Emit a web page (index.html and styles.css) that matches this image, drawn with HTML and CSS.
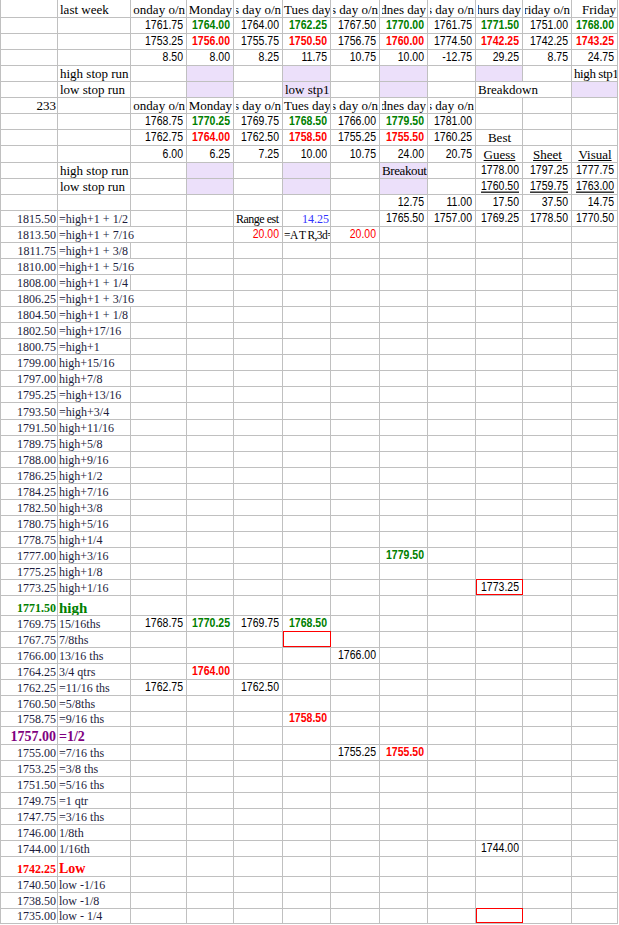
FILE: index.html
```html
<!DOCTYPE html>
<html>
<head>
<meta charset="utf-8">
<link rel="stylesheet" href="styles.css">
</head>
<body>
<table class="sheet">
<colgroup>
<col class="cA"><col class="cB"><col class="cC"><col class="cD"><col class="cE"><col class="cF"><col class="cG"><col class="cH"><col class="cI"><col class="cJ"><col class="cK"><col class="cL">
</colgroup>
<tbody>
<tr class="h17"><td></td><td>last week</td><td class="hd"><div><span>Monday o/n</span></div></td><td class="hd"><div><span>Monday</span></div></td><td class="hd"><div><span>Tues day o/n</span></div></td><td class="hl">Tues day</td><td class="hd"><div><span>Wednes day o/n</span></div></td><td class="hd"><div><span>Wednes day</span></div></td><td class="hd"><div><span>Thurs day o/n</span></div></td><td class="hd"><div><span>Thurs day</span></div></td><td class="hd"><div><span>Friday o/n</span></div></td><td class="hd"><div><span>Friday</span></div></td></tr>
<tr><td></td><td></td><td class="n"><span>1761.75</span></td><td class="n b g"><span>1764.00</span></td><td class="n"><span>1764.00</span></td><td class="n b g"><span>1762.25</span></td><td class="n"><span>1767.50</span></td><td class="n b g"><span>1770.00</span></td><td class="n"><span>1761.75</span></td><td class="n b g"><span>1771.50</span></td><td class="n"><span>1751.00</span></td><td class="n b g"><span>1768.00</span></td></tr>
<tr><td></td><td></td><td class="n"><span>1753.25</span></td><td class="n b red"><span>1756.00</span></td><td class="n"><span>1755.75</span></td><td class="n b red"><span>1750.50</span></td><td class="n"><span>1756.75</span></td><td class="n b red"><span>1760.00</span></td><td class="n"><span>1774.50</span></td><td class="n b red"><span>1742.25</span></td><td class="n"><span>1742.25</span></td><td class="n b red"><span>1743.25</span></td></tr>
<tr><td></td><td></td><td class="n"><span>8.50</span></td><td class="n"><span>8.00</span></td><td class="n"><span>8.25</span></td><td class="n"><span>11.75</span></td><td class="n"><span>10.75</span></td><td class="n"><span>10.00</span></td><td class="n"><span>-12.75</span></td><td class="n"><span>29.25</span></td><td class="n"><span>8.75</span></td><td class="n"><span>24.75</span></td></tr>
<tr><td></td><td>high stop run</td><td></td><td class="lv"></td><td></td><td class="lv"></td><td></td><td class="lv"></td><td></td><td class="lv"></td><td></td><td class="tight">high stp1</td></tr>
<tr><td></td><td>low stop run</td><td></td><td class="lv"></td><td></td><td class="lv">low stp1</td><td></td><td class="lv"></td><td></td><td class="ov">Breakdown</td><td></td><td class="lv"></td></tr>
<tr><td class="r">233</td><td></td><td class="hd"><div><span>Monday o/n</span></div></td><td class="hd"><div><span>Monday</span></div></td><td class="hd"><div><span>Tues day o/n</span></div></td><td class="hl">Tues day</td><td class="hd"><div><span>Wednes day o/n</span></div></td><td class="hd"><div><span>Wednes day</span></div></td><td class="hd"><div><span>Thurs day o/n</span></div></td><td></td><td></td><td></td></tr>
<tr><td></td><td></td><td class="n"><span>1768.75</span></td><td class="n b g"><span>1770.25</span></td><td class="n"><span>1769.75</span></td><td class="n b g"><span>1768.50</span></td><td class="n"><span>1766.00</span></td><td class="n b g"><span>1779.50</span></td><td class="n"><span>1781.00</span></td><td></td><td></td><td></td></tr>
<tr><td></td><td></td><td class="n"><span>1762.75</span></td><td class="n b red"><span>1764.00</span></td><td class="n"><span>1762.50</span></td><td class="n b red"><span>1758.50</span></td><td class="n"><span>1755.25</span></td><td class="n b red"><span>1755.50</span></td><td class="n"><span>1760.25</span></td><td class="c">Best</td><td></td><td></td></tr>
<tr class="h17"><td></td><td></td><td class="n"><span>6.00</span></td><td class="n"><span>6.25</span></td><td class="n"><span>7.25</span></td><td class="n"><span>10.00</span></td><td class="n"><span>10.75</span></td><td class="n"><span>24.00</span></td><td class="n"><span>20.75</span></td><td class="c u">Guess</td><td class="c u">Sheet</td><td class="c u">Visual</td></tr>
<tr><td></td><td>high stop run</td><td></td><td class="lv"></td><td></td><td class="lv"></td><td></td><td class="lv tight">Breakout</td><td></td><td class="n"><span>1778.00</span></td><td class="n"><span>1797.25</span></td><td class="n"><span>1777.75</span></td></tr>
<tr><td></td><td>low stop run</td><td></td><td class="lv"></td><td></td><td class="lv"></td><td></td><td class="lv"></td><td></td><td class="n u"><span>1760.50</span></td><td class="n u"><span>1759.75</span></td><td class="n u"><span>1763.00</span></td></tr>
<tr><td></td><td></td><td></td><td></td><td></td><td></td><td></td><td class="n"><span>12.75</span></td><td class="n"><span>11.00</span></td><td class="n"><span>17.50</span></td><td class="n"><span>37.50</span></td><td class="n"><span>14.75</span></td></tr>
<tr><td class="a">1815.50</td><td class="bl">=high+1 + 1/2</td><td></td><td></td><td class="sm">Range est</td><td class="a blue">14.25</td><td></td><td class="n"><span>1765.50</span></td><td class="n"><span>1757.00</span></td><td class="n"><span>1769.25</span></td><td class="n"><span>1778.50</span></td><td class="n"><span>1770.50</span></td></tr>
<tr><td class="a">1813.50</td><td class="bl ov">=high+1 + 7/16</td><td></td><td></td><td class="n red"><span>20.00</span></td><td class="sm atr">=A T R,3d=</td><td class="n red"><span>20.00</span></td><td></td><td></td><td></td><td></td><td></td></tr>
<tr><td class="a">1811.75</td><td class="bl">=high+1 + 3/8</td><td></td><td></td><td></td><td></td><td></td><td></td><td></td><td></td><td></td><td></td></tr>
<tr><td class="a">1810.00</td><td class="bl ov">=high+1 + 5/16</td><td></td><td></td><td></td><td></td><td></td><td></td><td></td><td></td><td></td><td></td></tr>
<tr><td class="a">1808.00</td><td class="bl">=high+1 + 1/4</td><td></td><td></td><td></td><td></td><td></td><td></td><td></td><td></td><td></td><td></td></tr>
<tr><td class="a">1806.25</td><td class="bl ov">=high+1 + 3/16</td><td></td><td></td><td></td><td></td><td></td><td></td><td></td><td></td><td></td><td></td></tr>
<tr><td class="a">1804.50</td><td class="bl">=high+1 + 1/8</td><td></td><td></td><td></td><td></td><td></td><td></td><td></td><td></td><td></td><td></td></tr>
<tr><td class="a">1802.50</td><td class="bl">=high+17/16</td><td></td><td></td><td></td><td></td><td></td><td></td><td></td><td></td><td></td><td></td></tr>
<tr><td class="a">1800.75</td><td class="bl">=high+1</td><td></td><td></td><td></td><td></td><td></td><td></td><td></td><td></td><td></td><td></td></tr>
<tr><td class="a">1799.00</td><td class="bl">high+15/16</td><td></td><td></td><td></td><td></td><td></td><td></td><td></td><td></td><td></td><td></td></tr>
<tr><td class="a">1797.00</td><td class="bl">high+7/8</td><td></td><td></td><td></td><td></td><td></td><td></td><td></td><td></td><td></td><td></td></tr>
<tr><td class="a">1795.25</td><td class="bl">=high+13/16</td><td></td><td></td><td></td><td></td><td></td><td></td><td></td><td></td><td></td><td></td></tr>
<tr class="h17"><td class="a">1793.50</td><td class="bl">=high+3/4</td><td></td><td></td><td></td><td></td><td></td><td></td><td></td><td></td><td></td><td></td></tr>
<tr><td class="a">1791.50</td><td class="bl">high+11/16</td><td></td><td></td><td></td><td></td><td></td><td></td><td></td><td></td><td></td><td></td></tr>
<tr><td class="a">1789.75</td><td class="bl">high+5/8</td><td></td><td></td><td></td><td></td><td></td><td></td><td></td><td></td><td></td><td></td></tr>
<tr><td class="a">1788.00</td><td class="bl">high+9/16</td><td></td><td></td><td></td><td></td><td></td><td></td><td></td><td></td><td></td><td></td></tr>
<tr><td class="a">1786.25</td><td class="bl">high+1/2</td><td></td><td></td><td></td><td></td><td></td><td></td><td></td><td></td><td></td><td></td></tr>
<tr><td class="a">1784.25</td><td class="bl">high+7/16</td><td></td><td></td><td></td><td></td><td></td><td></td><td></td><td></td><td></td><td></td></tr>
<tr><td class="a">1782.50</td><td class="bl">high+3/8</td><td></td><td></td><td></td><td></td><td></td><td></td><td></td><td></td><td></td><td></td></tr>
<tr><td class="a">1780.75</td><td class="bl">high+5/16</td><td></td><td></td><td></td><td></td><td></td><td></td><td></td><td></td><td></td><td></td></tr>
<tr><td class="a">1778.75</td><td class="bl">high+1/4</td><td></td><td></td><td></td><td></td><td></td><td></td><td></td><td></td><td></td><td></td></tr>
<tr><td class="a">1777.00</td><td class="bl">high+3/16</td><td></td><td></td><td></td><td></td><td></td><td class="n b g"><span>1779.50</span></td><td></td><td></td><td></td><td></td></tr>
<tr><td class="a">1775.25</td><td class="bl">high+1/8</td><td></td><td></td><td></td><td></td><td></td><td></td><td></td><td></td><td></td><td></td></tr>
<tr><td class="a">1773.25</td><td class="bl">high+1/16</td><td></td><td></td><td></td><td></td><td></td><td></td><td></td><td class="n box"><span>1773.25</span></td><td></td><td></td></tr>
<tr class="h20"><td class="a big-g">1771.50</td><td class="bl big-g hi">high</td><td></td><td></td><td></td><td></td><td></td><td></td><td></td><td></td><td></td><td></td></tr>
<tr><td class="a">1769.75</td><td class="bl">15/16ths</td><td class="n"><span>1768.75</span></td><td class="n b g"><span>1770.25</span></td><td class="n"><span>1769.75</span></td><td class="n b g"><span>1768.50</span></td><td></td><td></td><td></td><td></td><td></td><td></td></tr>
<tr><td class="a">1767.75</td><td class="bl">7/8ths</td><td></td><td></td><td></td><td class="box"></td><td></td><td></td><td></td><td></td><td></td><td></td></tr>
<tr><td class="a">1766.00</td><td class="bl">13/16 ths</td><td></td><td></td><td></td><td></td><td class="n"><span>1766.00</span></td><td></td><td></td><td></td><td></td><td></td></tr>
<tr><td class="a">1764.25</td><td class="bl">3/4 qtrs</td><td></td><td class="n b red"><span>1764.00</span></td><td></td><td></td><td></td><td></td><td></td><td></td><td></td><td></td></tr>
<tr><td class="a">1762.25</td><td class="bl">=11/16 ths</td><td class="n"><span>1762.75</span></td><td></td><td class="n"><span>1762.50</span></td><td></td><td></td><td></td><td></td><td></td><td></td><td></td></tr>
<tr><td class="a">1760.50</td><td class="bl">=5/8ths</td><td></td><td></td><td></td><td></td><td></td><td></td><td></td><td></td><td></td><td></td></tr>
<tr class="h15"><td class="a">1758.75</td><td class="bl">=9/16 ths</td><td></td><td></td><td></td><td class="n b red"><span>1758.50</span></td><td></td><td></td><td></td><td></td><td></td><td></td></tr>
<tr class="h18"><td class="a half">1757.00</td><td class="bl half">=1/2</td><td></td><td></td><td></td><td></td><td></td><td></td><td></td><td></td><td></td><td></td></tr>
<tr><td class="a">1755.00</td><td class="bl">=7/16 ths</td><td></td><td></td><td></td><td></td><td class="n"><span>1755.25</span></td><td class="n b red"><span>1755.50</span></td><td></td><td></td><td></td><td></td></tr>
<tr><td class="a">1753.25</td><td class="bl">=3/8 ths</td><td></td><td></td><td></td><td></td><td></td><td></td><td></td><td></td><td></td><td></td></tr>
<tr><td class="a">1751.50</td><td class="bl">=5/16 ths</td><td></td><td></td><td></td><td></td><td></td><td></td><td></td><td></td><td></td><td></td></tr>
<tr><td class="a">1749.75</td><td class="bl">=1 qtr</td><td></td><td></td><td></td><td></td><td></td><td></td><td></td><td></td><td></td><td></td></tr>
<tr><td class="a">1747.75</td><td class="bl">=3/16 ths</td><td></td><td></td><td></td><td></td><td></td><td></td><td></td><td></td><td></td><td></td></tr>
<tr><td class="a">1746.00</td><td class="bl">1/8th</td><td></td><td></td><td></td><td></td><td></td><td></td><td></td><td></td><td></td><td></td></tr>
<tr><td class="a">1744.00</td><td class="bl">1/16th</td><td></td><td></td><td></td><td></td><td></td><td></td><td></td><td class="n"><span>1744.00</span></td><td></td><td></td></tr>
<tr class="h20"><td class="a low">1742.25</td><td class="bl low lw">Low</td><td></td><td></td><td></td><td></td><td></td><td></td><td></td><td></td><td></td><td></td></tr>
<tr><td class="a">1740.50</td><td class="bl">low -1/16</td><td></td><td></td><td></td><td></td><td></td><td></td><td></td><td></td><td></td><td></td></tr>
<tr><td class="a">1738.50</td><td class="bl">low -1/8</td><td></td><td></td><td></td><td></td><td></td><td></td><td></td><td></td><td></td><td></td></tr>
<tr class="h15"><td class="a">1735.00</td><td class="bl">low - 1/4</td><td></td><td></td><td></td><td></td><td></td><td></td><td></td><td class="box"></td><td></td><td></td></tr>
</tbody>
</table>
</body>
</html>
```

FILE: styles.css
```css
html, body {
  margin: 0;
  padding: 0;
  background: #ffffff;
}

.sheet {
  border-collapse: collapse;
  table-layout: fixed;
  width: 618px;
}

.cA { width: 57px; }
.cB { width: 73px; }
.cC { width: 56px; }
.cD { width: 47px; }
.cE { width: 49px; }
.cF { width: 48px; }
.cG { width: 49px; }
.cH { width: 48px; }
.cI { width: 48px; }
.cJ { width: 47px; }
.cK { width: 49px; }
.cL { width: 46px; }

tr { height: 16px; }
tr.h17 { height: 17px; }
tr.h15 { height: 15px; }
tr.h18 { height: 18px; }
tr.h20 { height: 20px; }

td {
  border: 1px solid #c0c0c0;
  padding: 0 1px 0 2px;
  font-family: "Liberation Serif", "Times New Roman", serif;
  font-size: 13px;
  line-height: 14px;
  color: #000;
  white-space: nowrap;
  overflow: hidden;
  vertical-align: bottom;
}

.sheet tr:first-child td { border-top: none; }

/* right aligned header text, clipped on the left */
.hd div {
  display: flex;
  justify-content: flex-end;
  overflow: hidden;
}
.hd span { flex: none; }
.hl { padding-left: 1px; }

.r { text-align: right; }
.c { text-align: center; }
.u { text-decoration: underline; }
.tight { letter-spacing: -0.4px; }

/* narrow numeric cells */
.n {
  font-family: "Liberation Sans", Arial, sans-serif;
  font-size: 10.5px;
  text-align: right;
  padding-right: 3px;
}
.n span {
  display: inline-block;
  transform: scaleY(1.22);
  transform-origin: 50% 100%;
}
.n.u span { text-decoration: underline; }

.b { font-weight: bold; }
.g { color: #008000; }
.red { color: #ff0000; }
.blue { color: #3333ff; }

.lv { background: #ece0fa; }

.ov {
  overflow: visible;
  border-right-style: hidden;
}

/* lower left price ladder */
.a {
  font-size: 12px;
  text-align: right;
  color: #1c1c3c;
}
.bl {
  font-size: 12px;
  color: #1c1c3c;
  padding-left: 1px;
}
.sm {
  font-size: 12px;
  letter-spacing: -0.5px;
}
.atr {
  font-size: 11.5px;
  letter-spacing: -0.6px;
  padding-left: 1px;
}

.a.blue { color: #3333ff; }

.big-g {
  color: #008000;
  font-weight: bold;
}
.hi { font-size: 15px; }
.half {
  color: #800080;
  font-weight: bold;
  font-size: 14px;
}
.low {
  color: #ff0000;
  font-weight: bold;
}
.lw { font-size: 14px; }

.box {
  outline: 1px solid #ff0000;
  outline-offset: -1px;
}
```
